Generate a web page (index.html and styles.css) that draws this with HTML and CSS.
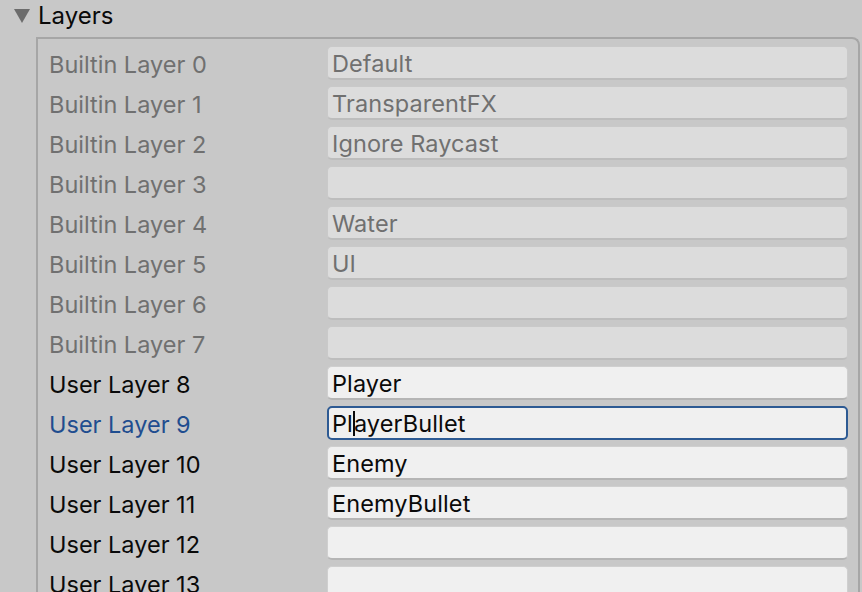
FILE: index.html
```html
<!DOCTYPE html>
<html>
<head>
<meta charset="utf-8">
<link rel="stylesheet" href="styles.css">
</head>
<body>
<div class="header">
  <span class="tri"></span>
  <span class="title">Layers</span>
</div>
<div class="box">
  <div class="row disabled"><span class="label">Builtin Layer 0</span><div class="field">Default</div></div>
  <div class="row disabled"><span class="label">Builtin Layer 1</span><div class="field">TransparentFX</div></div>
  <div class="row disabled"><span class="label">Builtin Layer 2</span><div class="field">Ignore Raycast</div></div>
  <div class="row disabled"><span class="label">Builtin Layer 3</span><div class="field"></div></div>
  <div class="row disabled"><span class="label">Builtin Layer 4</span><div class="field">Water</div></div>
  <div class="row disabled"><span class="label">Builtin Layer 5</span><div class="field">UI</div></div>
  <div class="row disabled"><span class="label">Builtin Layer 6</span><div class="field"></div></div>
  <div class="row disabled"><span class="label">Builtin Layer 7</span><div class="field"></div></div>
  <div class="row"><span class="label">User Layer 8</span><div class="field">Player</div></div>
  <div class="row focused"><span class="label">User Layer 9</span><div class="field">Pl<span class="caret"></span>ayerBullet</div></div>
  <div class="row"><span class="label">User Layer 10</span><div class="field">Enemy</div></div>
  <div class="row"><span class="label">User Layer 11</span><div class="field">EnemyBullet</div></div>
  <div class="row"><span class="label">User Layer 12</span><div class="field"></div></div>
  <div class="row"><span class="label">User Layer 13</span><div class="field"></div></div>
</div>
</body>
</html>
```
FILE: styles.css
```css
html, body {
  margin: 0;
  padding: 0;
  background: #c8c8c8;
  overflow: hidden;
  height: 592px;
}
body {
  font-family: Inter, "Noto Sans", sans-serif;
  font-size: 23.5px;
  color: #0a0a0a;
}
.header {
  height: 37px;
  display: flex;
  align-items: center;
  padding-left: 14px;
  box-sizing: border-box;
  padding-bottom: 6px;
}
.tri {
  width: 0;
  height: 0;
  border-left: 8px solid transparent;
  border-right: 8px solid transparent;
  border-top: 14px solid #6c6c6c;
  margin-right: 8px;
}
.title {
  font-size: 24px;
}
.box {
  margin-left: 36px;
  width: 824px;
  box-sizing: border-box;
  border: 2px solid #a6a6a6;
  border-bottom: none;
  border-top-right-radius: 8px;
  padding: 7px 11px 0 11px;
  display: flex;
  flex-direction: column;
  gap: 6px;
}
.row {
  display: grid;
  grid-template-columns: 278px 521px;
  align-items: center;
  height: 34px;
}
.label {
  white-space: nowrap;
  position: relative;
  top: 1px;
}
.field {
  height: 34px;
  box-sizing: border-box;
  border: 1px solid #cfcfcf;
  border-bottom: 2px solid #b5b5b5;
  border-radius: 5px;
  background: #f0f0f0;
  padding: 2px 0 0 4px;
  display: flex;
  align-items: center;
  white-space: nowrap;
  font-size: 23.5px;
  letter-spacing: 0.1px;
}
.disabled .label, .disabled .field {
  color: #707070;
}
.disabled .field {
  background: #dcdcdc;
  border-color: #c9c9c9;
  border-bottom-color: #bdbdbd;
}
.focused .label {
  color: #1f4d8f;
}
.focused .field {
  border: 2px solid #2d5a93;
  padding: 1px 0 0 3px;
}
.caret {
  display: inline-block;
  width: 2px;
  height: 25px;
  background: #0a0a0a;
  margin: 0 -1px 0 0;
}
```
